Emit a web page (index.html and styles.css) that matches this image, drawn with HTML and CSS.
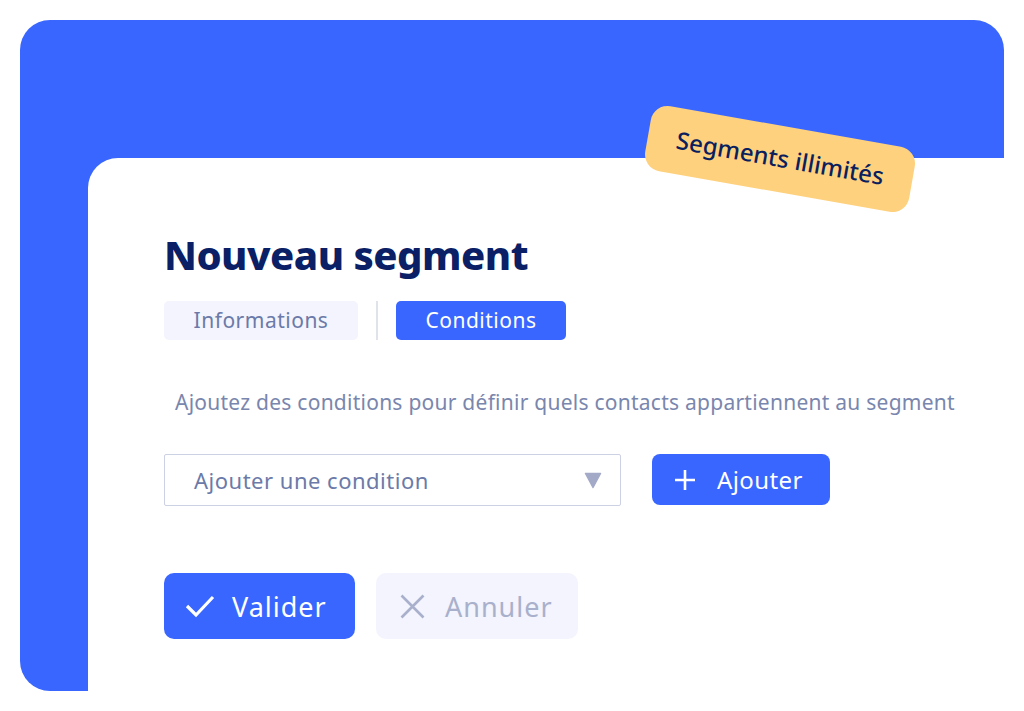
FILE: index.html
```html
<!DOCTYPE html>
<html lang="fr">
<head>
  <meta charset="UTF-8">
  <title>Nouveau segment</title>
  <link rel="stylesheet" href="styles.css">
</head>
<body>
  <div class="frame">
    <div class="badge">Segments illimités</div>
    <div class="card">
      <h1>Nouveau segment</h1>

      <div class="tabs">
        <span class="tab info">Informations</span>
        <span class="sep"></span>
        <span class="tab active">Conditions</span>
      </div>

      <p class="hint">Ajoutez des conditions pour définir quels contacts appartiennent au segment</p>

      <div class="row">
        <div class="select">
          <span>Ajouter une condition</span>
          <svg class="caret" width="18" height="17" viewBox="0 0 18 17"><path d="M1.5 1.5h15L9 15.5z" fill="#a3aac8" stroke="#a3aac8" stroke-width="1.5" stroke-linejoin="round"/></svg>
        </div>
        <button class="btn add">
          <svg width="22" height="22" viewBox="0 0 22 22"><path d="M11 1v20M1 11h20" stroke="#fff" stroke-width="2.6"/></svg>
          Ajouter
        </button>
      </div>

      <div class="actions">
        <button class="btn big primary">
          <svg width="30" height="24" viewBox="0 0 30 24"><path d="M2 12l9 9L28 3" fill="none" stroke="#fff" stroke-width="3.2"/></svg>
          Valider
        </button>
        <button class="btn big ghost">
          <svg width="25" height="25" viewBox="0 0 25 25"><path d="M1.5 1.5l22 22M23.5 1.5l-22 22" stroke="#a9b0cc" stroke-width="2.6"/></svg>
          Annuler
        </button>
      </div>
    </div>
  </div>
</body>
</html>
```

FILE: styles.css
```css
body {
  margin: 0;
  background: #fff;
  font-family: "Noto Sans", sans-serif;
  height: 711px;
  overflow: hidden;
}

.frame {
  position: relative;
  margin: 20px 20px 0;
  height: 671px;
  background: #3966ff;
  border-radius: 30px;
  padding: 138px 0 0 68px;
  box-sizing: border-box;
}

.card {
  background: #fff;
  border-radius: 30px 0 0 0;
  margin-right: -20px;
  height: 553px;
  padding: 74px 0 0 76px;
  box-sizing: border-box;
}

/* tilted sticker over the corner */
.badge {
  position: absolute;
  left: 626px;
  top: 106px;
  width: 268px;
  height: 66px;
  line-height: 64px;
  text-align: center;
  background: #fed17e;
  border-radius: 17px;
  color: #0b1f5e;
  font-size: 24px;
  font-weight: 500;
  transform: rotate(10deg);
}

h1 {
  margin: 0;
  font-size: 40px;
  font-weight: 800;
  color: #0a1f66;
  letter-spacing: -0.5px;
  line-height: 46px;
}

.tabs {
  display: flex;
  align-items: center;
  gap: 18px;
  margin-top: 23px;
}

.tab {
  display: block;
  height: 39px;
  line-height: 38px;
  text-align: center;
  border-radius: 5px;
  background: #f3f4fd;
  color: #6b7aa8;
  font-size: 21px;
  letter-spacing: 0.5px;
}

.tab.info { width: 194px; }

.tab.active {
  width: 170px;
  background: #3966ff;
  color: #fff;
}

.sep {
  width: 2px;
  height: 39px;
  background: #e1e3ea;
}

.hint {
  margin: 48px 0 0 11px;
  font-size: 21px;
  letter-spacing: 0.25px;
  color: #7986ad;
}

.row {
  display: flex;
  gap: 31px;
  margin-top: 38px;
}

.select {
  display: flex;
  align-items: center;
  justify-content: space-between;
  width: 457px;
  height: 52px;
  padding: 0 18px 0 29px;
  box-sizing: border-box;
  border: 1px solid #ccd1e4;
  border-radius: 2px;
  color: #6b7aa8;
  font-size: 22px;
  letter-spacing: 0.5px;
}

.btn {
  display: flex;
  align-items: center;
  border: none;
  font-family: inherit;
  color: #fff;
}

.add {
  height: 51px;
  width: 178px;
  padding: 0 0 0 22px;
  gap: 21px;
  border-radius: 8px;
  background: #3966ff;
  font-size: 24px;
  letter-spacing: 0.4px;
}

.actions {
  display: flex;
  gap: 21px;
  margin-top: 67px;
}

.big {
  height: 66px;
  border-radius: 10px;
  font-size: 27px;
  letter-spacing: 1px;
  gap: 17px;
}

.primary {
  width: 191px;
  padding-left: 21px;
  background: #3966ff;
}

.ghost {
  width: 202px;
  padding-left: 24px;
  gap: 20px;
  background: #f3f4fd;
  color: #a9b0cc;
}
```
